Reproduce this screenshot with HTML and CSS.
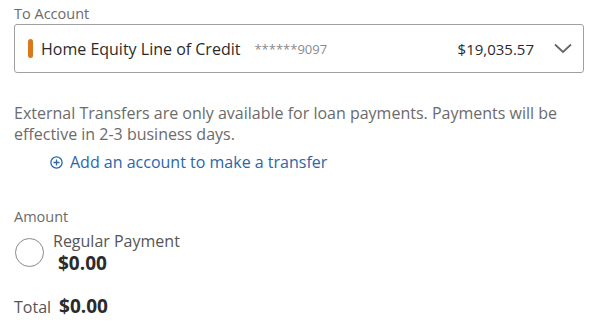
FILE: index.html
```html
<!DOCTYPE html>
<html lang="en">
<head>
    <meta charset="UTF-8">
    <title>Transfer</title>
    <link rel="stylesheet" href="styles.css">
</head>
<body>
    <div class="transfer-form">
        <label class="field-label">To Account</label>
        <div class="account-select">
            <span class="account-flag"></span>
            <span class="account-name">Home Equity Line of Credit</span>
            <span class="account-mask">******9097</span>
            <span class="account-balance">$19,035.57</span>
            <svg class="chevron" width="18" height="11" viewBox="0 0 18 11">
                <path d="M1 1.5 L9 9 L17 1.5" fill="none" stroke="#666" stroke-width="1.8"/>
            </svg>
        </div>

        <p class="notice">External Transfers are only available for loan payments. Payments will be effective in 2-3 business days.</p>

        <a class="add-link" href="#">
            <svg width="13" height="13" viewBox="0 0 13 13">
                <circle cx="6.5" cy="6.5" r="5.6" fill="none" stroke="#2b66a8" stroke-width="1.3"/>
                <path d="M6.5 3.5 V9.5 M3.5 6.5 H9.5" stroke="#2b66a8" stroke-width="1.3"/>
            </svg>
            Add an account to make a transfer
        </a>

        <label class="field-label amount-label">Amount</label>
        <div class="payment-option">
            <span class="radio"></span>
            <div class="payment-text">
                <div class="payment-name">Regular Payment</div>
                <div class="payment-value">$0.00</div>
            </div>
        </div>

        <div class="total">
            <span class="total-label">Total</span>
            <span class="total-value">$0.00</span>
        </div>
    </div>
</body>
</html>
```

FILE: styles.css
```css
body {
    margin: 0;
    background-color: #fff;
    font-family: "Open Sans", sans-serif;
    color: #333;
}

.transfer-form {
    padding: 4px 16px 0 14px;
    display: flex;
    flex-direction: column;
}

.field-label {
    font-size: 14.5px;
    color: #6b6b6b;
    line-height: 20px;
}

.account-select {
    display: flex;
    align-items: center;
    height: 47px;
    border: 1px solid #a0a0a0;
    border-radius: 3px;
    padding: 0 11px 0 13px;
}

.account-flag {
    width: 5px;
    height: 19px;
    border-radius: 3px;
    background-color: #d9791a;
    margin-right: 8px;
}

.account-name {
    font-size: 16px;
    color: #2b2b2b;
}

.account-mask {
    font-size: 13px;
    color: #8a8a8a;
    margin-left: 14px;
}

.account-balance {
    margin-left: auto;
    font-size: 15px;
    color: #2b2b2b;
}

.chevron {
    margin-left: 20px;
}

.notice {
    margin: 30px 0 0 0;
    font-size: 16px;
    line-height: 21px;
    color: #6b6b6b;
}

.add-link {
    margin: 6px 0 0 36px;
    display: flex;
    align-items: center;
    gap: 7px;
    font-size: 16px;
    line-height: 22px;
    color: #2b66a8;
    text-decoration: none;
}

.amount-label {
    margin-top: 34px;
}

.payment-option {
    display: flex;
    align-items: flex-start;
    margin-top: 4px;
}

.radio {
    width: 27px;
    height: 27px;
    border: 1px solid #8a8a8a;
    border-radius: 50%;
    margin: 7px 9px 0 1px;
}

.payment-name {
    font-size: 16px;
    color: #555;
    line-height: 20px;
}

.payment-value {
    font-size: 19px;
    font-weight: bold;
    color: #2b2b2b;
    margin-left: 5px;
    line-height: 24px;
}

.total {
    margin-top: 18px;
    display: flex;
    align-items: baseline;
    gap: 8px;
}

.total-label {
    font-size: 16px;
    color: #555;
}

.total-value {
    font-size: 19px;
    font-weight: bold;
    color: #2b2b2b;
}
```
